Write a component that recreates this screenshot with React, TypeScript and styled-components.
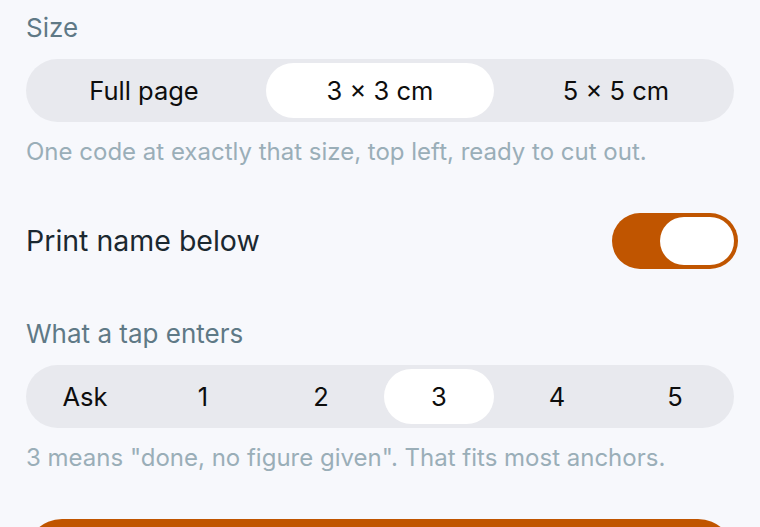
import { useState } from "react";
import styled, { createGlobalStyle } from "styled-components";

const GlobalStyle = createGlobalStyle`
  html, body {
    margin: 0;
    padding: 0;
    background: #f7f8fc;
  }
  body {
    font-family: Inter, "Noto Sans", sans-serif;
    -webkit-font-smoothing: antialiased;
  }
`;

const sizes = ["Full page", "3 × 3 cm", "5 × 5 cm"];
const taps = ["Ask", "1", "2", "3", "4", "5"];

const App = () => {
  const [size, setSize] = useState(1);
  const [tap, setTap] = useState(3);
  const [printName, setPrintName] = useState(true);

  return (
    <>
      <GlobalStyle />
      <Page>
        <SectionLabel>Size</SectionLabel>
        <Segmented>
          {sizes.map((s, i) => (
            <Segment key={s} active={i === size} onClick={() => setSize(i)}>
              {s}
            </Segment>
          ))}
        </Segmented>
        <Hint>One code at exactly that size, top left, ready to cut out.</Hint>

        <ToggleRow>
          <RowLabel>Print name below</RowLabel>
          <Switch on={printName} onClick={() => setPrintName(!printName)}>
            <Thumb />
          </Switch>
        </ToggleRow>

        <SectionLabel>What a tap enters</SectionLabel>
        <Segmented>
          {taps.map((t, i) => (
            <Segment key={t} active={i === tap} onClick={() => setTap(i)}>
              {t}
            </Segment>
          ))}
        </Segmented>
        <Hint>3 means "done, no figure given". That fits most anchors.</Hint>

        <PrimaryButton />
      </Page>
    </>
  );
};
export default App;

const Page = styled.div`
  display: flex;
  flex-direction: column;
  padding: 12px 26px 0;
  height: 527px;
  box-sizing: border-box;
  overflow: hidden;
  & > * {
    flex-shrink: 0;
  }
`;
const SectionLabel = styled.div`
  color: #5f7986;
  font-size: 26px;
  font-weight: 400;
  line-height: 32px;
  margin-bottom: 15px;
`;
const Segmented = styled.div`
  display: flex;
  gap: 8px;
  padding: 4px;
  height: 63px;
  box-sizing: border-box;
  background: #e8e9ee;
  border-radius: 32px;
`;
const Segment = styled.button<{ active?: boolean }>`
  flex: 1;
  border: none;
  border-radius: 28px;
  background: ${({ active }) => (active ? "#ffffff" : "transparent")};
  color: #0d0d0d;
  font-family: inherit;
  font-size: 25.5px;
  font-weight: 400;
  cursor: pointer;
  padding: 0;
`;
const Hint = styled.p`
  margin: 15px 0 0;
  color: #9aaeb8;
  font-size: 24px;
  line-height: 30px;
`;
const ToggleRow = styled.div`
  display: flex;
  align-items: center;
  justify-content: space-between;
  margin: 46px -4px 49px 0;
`;
const RowLabel = styled.span`
  color: #1b2830;
  font-size: 28.5px;
  line-height: 36px;
`;
const Switch = styled.button<{ on?: boolean }>`
  width: 126px;
  height: 56px;
  padding: 4px;
  border: none;
  border-radius: 28px;
  background: ${({ on }) => (on ? "#c05500" : "#d5d8de")};
  display: flex;
  justify-content: ${({ on }) => (on ? "flex-end" : "flex-start")};
  cursor: pointer;
`;
const Thumb = styled.span`
  width: 74px;
  height: 48px;
  border-radius: 24px;
  background: #ffffff;
`;
const PrimaryButton = styled.button`
  margin-top: 46px;
  height: 72px;
  border: none;
  border-radius: 56px;
  background: #c05500;
`;
